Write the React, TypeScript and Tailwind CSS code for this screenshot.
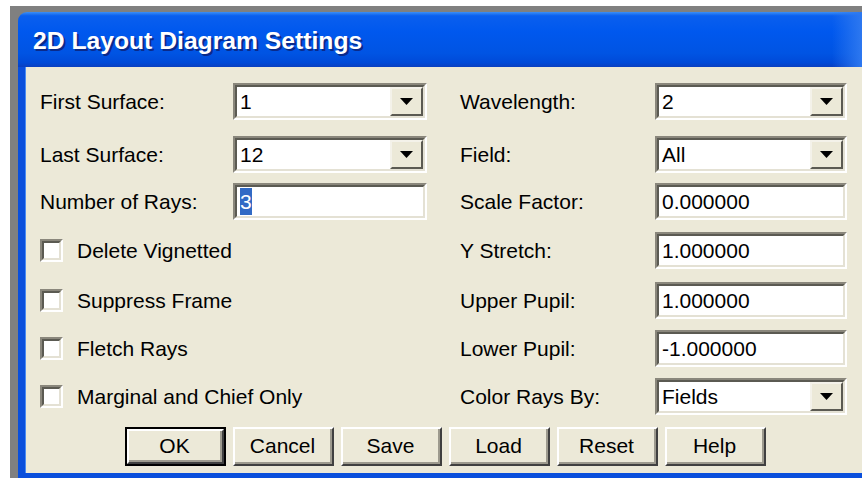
// 2D layout diagram settings dialog, Windows XP look

const FONT = "font-['Liberation_Sans',Arial,sans-serif]";

function Sunken({ children }: { children: React.ReactNode }) {
  return (
    <div className="h-full w-full border-2 border-t-[#8a877c] border-l-[#8a877c] border-b-white border-r-white">
      <div className="h-full w-full border-2 border-t-[#5b5a52] border-l-[#5b5a52] border-b-[#e4e1d4] border-r-[#e4e1d4] bg-white flex items-center">
        {children}
      </div>
    </div>
  );
}

function EditBox({ value, selected }: { value: string; selected?: boolean }) {
  return (
    <Sunken>
      <span className="pl-[3px] text-[21px] leading-none text-black">
        {selected ? (
          <span className="bg-[#316ac5] text-white py-[2px]">{value}</span>
        ) : (
          value
        )}
      </span>
    </Sunken>
  );
}

function ComboBox({ value }: { value: string }) {
  return (
    <Sunken>
      <span className="flex-1 pl-[3px] text-[21px] leading-none text-black">{value}</span>
      <div className="h-full w-[33px] border-2 border-t-[#f4f2ea] border-l-[#f4f2ea] border-b-[#5b5a52] border-r-[#5b5a52] bg-[#ece9d8] flex items-center justify-center">
        <svg width="13" height="7" viewBox="0 0 13 7">
          <path d="M0 0h13L6.5 7z" fill="#000" />
        </svg>
      </div>
    </Sunken>
  );
}

function CheckBox({ label }: { label: string }) {
  return (
    <div className="flex items-center h-full">
      <div className="w-[23px] h-[23px] border-2 border-t-[#8a877c] border-l-[#8a877c] border-b-white border-r-white">
        <div className="w-full h-full border-2 border-t-[#5b5a52] border-l-[#5b5a52] border-b-[#e4e1d4] border-r-[#e4e1d4] bg-white" />
      </div>
      <span className="ml-[14px] text-[21px] text-black">{label}</span>
    </div>
  );
}

function Field({ label, children }: { label: string; children: React.ReactNode }) {
  return (
    <div className="flex items-center h-full">
      <span className="w-[193px] text-[21px] text-black">{label}</span>
      <div className="w-[194px] h-full">{children}</div>
    </div>
  );
}

type RowProps = {
  left: React.ReactNode;
  rightLabel: string;
  rightControl: React.ReactNode;
  className?: string;
};

function Row({ left, rightLabel, rightControl, className = "" }: RowProps) {
  return (
    <div className={`flex h-[37px] ${className}`}>
      <div className="w-[387px] h-full">{left}</div>
      <div className="w-[33px]" />
      <div className="w-[389px] h-full flex items-center">
        <span className="w-[195px] text-[21px] text-black">{rightLabel}</span>
        <div className="w-[192px] h-full">{rightControl}</div>
      </div>
    </div>
  );
}

function Button({ label, isDefault }: { label: string; isDefault?: boolean }) {
  return (
    <div className={`w-[101px] h-[39px] ${isDefault ? "border-2 border-black" : ""}`}>
      <div className="h-full w-full border-2 border-t-white border-l-white border-b-[#404040] border-r-[#404040]">
        <div className="h-full w-full border-b-2 border-r-2 border-b-[#9d9a8e] border-r-[#9d9a8e] bg-[#ece9d8] flex items-center justify-center text-[21px] text-black">
          {label}
        </div>
      </div>
    </div>
  );
}

export default function App() {
  return (
    <div className={`w-[862px] h-[478px] bg-white pl-[10px] pt-[6px] overflow-hidden ${FONT}`}>
      <div className="w-full h-full bg-[#808080] pl-[8px] pt-[6px]">
        <div className="w-full h-full rounded-tl-[9px] overflow-hidden flex flex-col">
          {/* Title bar */}
          <div className="h-[55px] flex items-center bg-[linear-gradient(to_bottom,#3c8ff6_0%,#0a5fee_7%,#0058ee_35%,#0054e3_75%,#004ad8_92%,#0a3fc0_100%)]">
            <span className="pl-[15px] pt-[3px] text-[24.7px] font-bold text-white [text-shadow:2px_2px_0_#0a2a8a]">
              2D Layout Diagram Settings
            </span>
            <div className="flex-1" />
            <div className="w-[30px] h-full bg-[linear-gradient(to_right,transparent,#2d78f0)]" />
          </div>

          {/* Client area */}
          <div className="flex-1 border-l-[7px] border-b-[5px] border-[#0a4fdc] flex flex-col">
            <div className="flex-1 border-l border-[#4a8cf2] bg-[#ece9d8] pl-[14px] pt-[16px]">
              <Row
                left={<Field label="First Surface:"><ComboBox value="1" /></Field>}
                rightLabel="Wavelength:"
                rightControl={<ComboBox value="2" />}
              />
              <Row
                className="mt-[16px]"
                left={<Field label="Last Surface:"><ComboBox value="12" /></Field>}
                rightLabel="Field:"
                rightControl={<ComboBox value="All" />}
              />
              <Row
                className="mt-[10px]"
                left={<Field label="Number of Rays:"><EditBox value="3" selected /></Field>}
                rightLabel="Scale Factor:"
                rightControl={<EditBox value="0.000000" />}
              />
              <Row
                className="mt-[12px]"
                left={<CheckBox label="Delete Vignetted" />}
                rightLabel="Y Stretch:"
                rightControl={<EditBox value="1.000000" />}
              />
              <Row
                className="mt-[13px]"
                left={<CheckBox label="Suppress Frame" />}
                rightLabel="Upper Pupil:"
                rightControl={<EditBox value="1.000000" />}
              />
              <Row
                className="mt-[11px]"
                left={<CheckBox label="Fletch Rays" />}
                rightLabel="Lower Pupil:"
                rightControl={<EditBox value="-1.000000" />}
              />
              <Row
                className="mt-[11px]"
                left={<CheckBox label="Marginal and Chief Only" />}
                rightLabel="Color Rays By:"
                rightControl={<ComboBox value="Fields" />}
              />

              {/* Dialog buttons */}
              <div className="flex gap-[7px] ml-[85px] mt-[12px]">
                <Button label="OK" isDefault />
                <Button label="Cancel" />
                <Button label="Save" />
                <Button label="Load" />
                <Button label="Reset" />
                <Button label="Help" />
              </div>
            </div>
          </div>
        </div>
      </div>
    </div>
  );
}
